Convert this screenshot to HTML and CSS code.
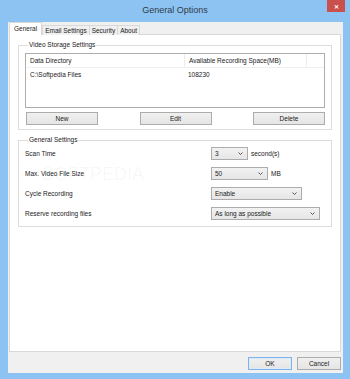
FILE: index.html
```html
<!DOCTYPE html>
<html lang="en">
<head>
    <meta charset="UTF-8">
    <meta name="viewport" content="width=device-width, initial-scale=1.0">
    <title>General Options</title>
    <link rel="stylesheet" href="styles.css">
</head>
<body>
    <div class="window">
        <div class="titlebar">
            <span class="title">General Options</span>
            <span class="close">&#x2715;</span>
        </div>

        <div class="client">
            <div class="tabs">
                <div class="tab active">General</div>
                <div class="tab">Email Settings</div>
                <div class="tab">Security</div>
                <div class="tab">About</div>
            </div>

            <div class="page">
                <!-- storage -->
                <fieldset class="group">
                    <legend>Video Storage Settings</legend>
                    <div class="list">
                        <div class="list-head">
                            <div class="col col-dir">Data Directory</div>
                            <div class="col col-space">Available Recording Space(MB)</div>
                            <div class="col col-rest"></div>
                        </div>
                        <div class="list-row">
                            <div class="col col-dir">C:\Softpedia Files</div>
                            <div class="col col-space">108230</div>
                        </div>
                    </div>
                    <div class="list-buttons">
                        <button class="btn wide">New</button>
                        <button class="btn wide">Edit</button>
                        <button class="btn wide">Delete</button>
                    </div>
                </fieldset>

                <!-- general -->
                <fieldset class="group general">
                    <legend>General Settings</legend>
                    <div class="setting">
                        <span class="label">Scan Time</span>
                        <div class="select w-scan"><span>3</span><svg class="chev" width="5" height="3" viewBox="0 0 5 3"><path d="M0.5 0.5 L2.5 2.5 L4.5 0.5" fill="none" stroke="#444" stroke-width="0.9"/></svg></div>
                        <span class="unit">second(s)</span>
                    </div>
                    <div class="setting">
                        <span class="label">Max. Video File Size</span>
                        <div class="select w-size"><span>50</span><svg class="chev" width="5" height="3" viewBox="0 0 5 3"><path d="M0.5 0.5 L2.5 2.5 L4.5 0.5" fill="none" stroke="#444" stroke-width="0.9"/></svg></div>
                        <span class="unit">MB</span>
                    </div>
                    <div class="setting">
                        <span class="label">Cycle Recording</span>
                        <div class="select w-cycle"><span>Enable</span><svg class="chev" width="5" height="3" viewBox="0 0 5 3"><path d="M0.5 0.5 L2.5 2.5 L4.5 0.5" fill="none" stroke="#444" stroke-width="0.9"/></svg></div>
                    </div>
                    <div class="setting">
                        <span class="label">Reserve recording files</span>
                        <div class="select w-reserve"><span>As long as possible</span><svg class="chev" width="5" height="3" viewBox="0 0 5 3"><path d="M0.5 0.5 L2.5 2.5 L4.5 0.5" fill="none" stroke="#444" stroke-width="0.9"/></svg></div>
                    </div>
                </fieldset>

                <div class="watermark">SOFTPEDIA</div>
            </div>

            <div class="footer">
                <button class="btn small default">OK</button>
                <button class="btn small">Cancel</button>
            </div>
        </div>
    </div>
</body>
</html>
```

FILE: styles.css
```css
body {
    margin: 0;
    font-family: "Liberation Sans", Arial, sans-serif;
    font-size: 6.5px;
    color: #1a1a1a;
}

.window {
    width: 350px;
    height: 379px;
    background: #8dc3f2;
    display: flex;
    flex-direction: column;
}

/* title bar */
.titlebar {
    position: relative;
    height: 22px;
    display: flex;
    align-items: center;
    justify-content: center;
}
.title {
    font-size: 9px;
    color: #2f3b47;
    margin-top: -2px;
}
.close {
    position: absolute;
    top: 0;
    right: 5px;
    width: 18px;
    height: 12px;
    background: #c9504b;
    color: #fff;
    font-size: 6px;
    font-weight: bold;
    display: flex;
    align-items: center;
    justify-content: center;
}

.client {
    flex: 1;
    margin: 0 7px 6px 8px;
    padding: 1px 2px 0 1px;
    background: #f0f0f0;
    display: flex;
    flex-direction: column;
}

/* tabs */
.tabs {
    display: flex;
    align-items: flex-end;
    height: 12px;
    margin-bottom: -1px;
    position: relative;
    z-index: 1;
}
.tab {
    height: 9px;
    line-height: 9px;
    padding: 0 2px;
    border: 1px solid #d9d9d9;
    border-bottom: none;
    background: #f0f0f0;
    margin-left: -1px;
    white-space: nowrap;
}
.tab.active {
    height: 12px;
    line-height: 11px;
    padding: 0 4px;
    background: #fff;
    margin-left: 0;
    margin-right: 1px;
}

.page {
    flex: 1;
    position: relative;
    background: #fff;
    border: 1px solid #d9d9d9;
    padding: 6px 8px 0 8px;
}

/* group boxes */
.group {
    margin: 0;
    padding: 4px 6px 4px 6px;
    border: 1px solid #dcdcdc;
}
.group legend {
    padding: 0 1px;
    margin-left: 3px;
    line-height: 8px;
}
.group.general {
    margin-top: 6px;
    padding-top: 3px;
    padding-bottom: 6px;
}

.list {
    height: 53px;
    border: 1px solid #adadad;
    background: #fff;
}
.list-head,
.list-row {
    display: flex;
    height: 13px;
    line-height: 13px;
}
.list-head {
    border-bottom: 1px solid #f0f0f0;
}
.col {
    padding-left: 4px;
    white-space: nowrap;
}
.col-dir {
    width: 154px;
}
.col-space {
    width: 117px;
}
.list-head .col-space,
.list-head .col-rest {
    border-left: 1px solid #ececec;
}
.col-rest {
    flex: 1;
}

.list-buttons {
    display: flex;
    justify-content: space-between;
    margin-top: 4px;
    padding: 0 0 0 1px;
}

.btn {
    font-family: inherit;
    font-size: 6.5px;
    color: #1a1a1a;
    height: 13px;
    padding: 0;
    border: 1px solid #acacac;
    background: linear-gradient(#f0f0f0, #e5e5e5);
}
.btn.wide {
    width: 72px;
}
.btn.small {
    width: 44px;
}
.btn.default {
    border-color: #7eb4ea;
    box-shadow: inset 0 0 0 1px #dbeaf8;
}

/* settings rows */
.setting {
    display: flex;
    align-items: center;
    height: 13px;
    margin-bottom: 7px;
}
.setting:last-child {
    margin-bottom: 0;
}
.label {
    width: 186px;
}
.unit {
    margin-left: 3px;
}
.select {
    height: 13px;
    box-sizing: border-box;
    border: 1px solid #acacac;
    background: linear-gradient(#f2f2f2, #e6e6e6);
    display: flex;
    align-items: center;
    justify-content: space-between;
    padding: 0 4px 0 3px;
}
.w-scan { width: 37px; }
.w-size { width: 57px; }
.w-cycle { width: 91px; }
.w-reserve { width: 109px; }

/* faint site stamp behind the settings */
.watermark {
    position: absolute;
    left: 32px;
    top: 130px;
    font-size: 18px;
    line-height: 18px;
    color: rgba(0, 0, 0, 0.04);
    pointer-events: none;
}

.footer {
    display: flex;
    justify-content: flex-end;
    gap: 5px;
    margin-top: 5px;
    padding-bottom: 3px;
}
```
